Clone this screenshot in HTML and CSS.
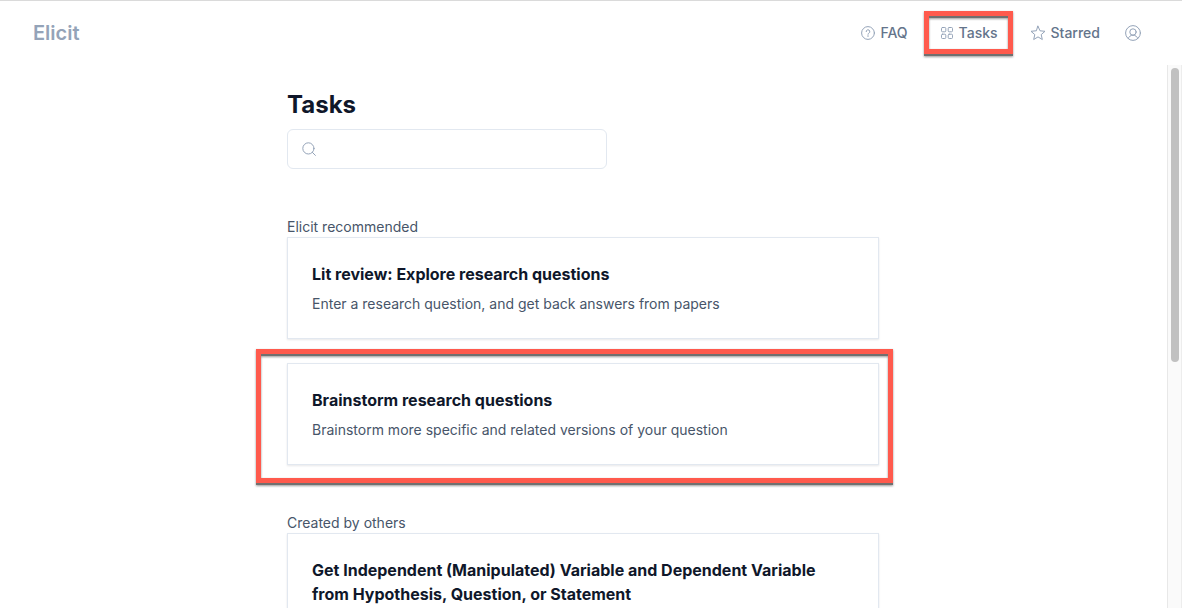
FILE: index.html
```html
<!DOCTYPE html>
<html lang="en">
<head>
<meta charset="utf-8">
<meta name="viewport" content="width=device-width, initial-scale=1">
<title>Elicit – Tasks</title>
<link rel="stylesheet" href="styles.css">
</head>
<body>
<header class="topbar">
  <a class="brand" href="#">Elicit</a>
  <nav class="nav">
    <a class="nav-link" href="#">
      <svg class="icon" viewBox="0 0 14 14" aria-hidden="true"><circle cx="7" cy="7" r="6.4"/><path d="M5.2 5.6a1.8 1.8 0 1 1 2.6 1.6c-.5.25-.8.5-.8 1.1"/><path d="M7 9.6v.9"/></svg>
      FAQ
    </a>
    <a class="nav-link nav-link-marked" href="#">
      <svg class="icon" viewBox="0 0 14 14" aria-hidden="true"><rect x="1.5" y="1.5" width="4.3" height="4.3" rx="1"/><rect x="8.2" y="1.5" width="4.3" height="4.3" rx="1"/><rect x="1.5" y="8.2" width="4.3" height="4.3" rx="1"/><rect x="8.2" y="8.2" width="4.3" height="4.3" rx="1"/></svg>
      Tasks
    </a>
    <a class="nav-link" href="#">
      <svg class="icon icon-star" viewBox="0 0 16 16" aria-hidden="true"><path d="M8 1.2 10 5.8 15 6.3 11.2 9.6 12.3 14.5 8 11.9 3.7 14.5 4.8 9.6 1 6.3 6 5.8Z"/></svg>
      Starred
    </a>
    <button class="account" type="button" aria-label="Account">
      <svg class="icon icon-account" viewBox="0 0 16 16" aria-hidden="true"><circle cx="8" cy="8" r="7.4"/><circle cx="8" cy="7" r="3.2"/><path d="M3.2 13.5C3.9 11.5 5.7 10.2 8 10.2s4.1 1.3 4.8 3.3"/></svg>
    </button>
  </nav>
</header>
<div class="viewport">
  <main class="content">
    <h1 class="title">Tasks</h1>
    <label class="search">
      <svg class="icon" viewBox="0 0 14 14" aria-hidden="true"><circle cx="6.4" cy="6.4" r="5.6"/><path d="M10.4 10.4 13.4 13.4"/></svg>
      <input class="search-input" type="search" aria-label="Search tasks">
    </label>
    <section class="group">
      <h2 class="group-title">Elicit recommended</h2>
      <div class="cards">
        <a class="card" href="#">
          <h3 class="card-title">Lit review: Explore research questions</h3>
          <p class="card-text">Enter a research question, and get back answers from papers</p>
        </a>
        <a class="card card-marked" href="#">
          <h3 class="card-title">Brainstorm research questions</h3>
          <p class="card-text">Brainstorm more specific and related versions of your question</p>
        </a>
      </div>
    </section>
    <section class="group">
      <h2 class="group-title">Created by others</h2>
      <div class="cards">
        <a class="card" href="#">
          <h3 class="card-title">Get Independent (Manipulated) Variable and Dependent Variable from Hypothesis, Question, or Statement</h3>
        </a>
      </div>
    </section>
  </main>
  <div class="scrolltrack" aria-hidden="true"><div class="scrollthumb"></div></div>
</div>
</body>
</html>
```
FILE: styles.css
```css
* { box-sizing: border-box; }

body {
  margin: 0;
  height: 100vh;
  display: flex;
  flex-direction: column;
  overflow: hidden;
  background: #fff;
  border-top: 1px solid #dadada;
  color: #475569;
  font: 400 14px/20px Inter, "Liberation Sans", sans-serif;
}

a { color: inherit; text-decoration: none; }
h1, h2, h3, p { margin: 0; }

.icon {
  width: 14px;
  height: 14px;
  flex: none;
  fill: none;
  stroke: #94a3b8;
  stroke-width: 1;
  stroke-linecap: round;
  stroke-linejoin: round;
}
.icon-star { width: 16px; height: 16px; }
.icon-account { width: 16px; height: 16px; }

.topbar {
  flex: none;
  display: flex;
  align-items: center;
  justify-content: space-between;
  height: 64px;
  padding: 0 41px 0 33px;
}
.brand {
  color: #94a3b8;
  font-size: 20px;
  font-weight: 600;
  line-height: 28px;
}
.nav { display: flex; align-items: center; gap: 32px; }
.nav-link {
  position: relative;
  display: flex;
  align-items: center;
  gap: 5px;
  color: #64748b;
  font-weight: 500;
}
.account {
  display: flex;
  margin-left: -7px;
  padding: 0;
  border: 0;
  background: none;
}

/* Highlight frames */
.nav-link-marked::after,
.card-marked::after {
  content: "";
  position: absolute;
  border: 5px solid #ff5a4d;
  filter: drop-shadow(0 2px 0 #707070) drop-shadow(0 1px 1px #999);
  pointer-events: none;
}
.nav-link-marked::after { inset: -12px -15px -11px -16px; }
.card-marked::after { inset: -15px -15px -19px -32px; }

.viewport { flex: 1; display: flex; gap: 1px; min-height: 0; }
.content {
  flex: 1;
  max-width: 592px;
  margin: 0 auto;
  padding-top: 24px;
}
.title {
  color: #0f172a;
  font-size: 24px;
  font-weight: 700;
  line-height: 32px;
}
.search {
  display: flex;
  align-items: center;
  gap: 12px;
  width: 320px;
  max-width: 100%;
  height: 40px;
  margin-top: 8px;
  padding: 0 14px;
  border: 1px solid #e2e8f0;
  border-radius: 6px;
}
.search-input {
  flex: 1;
  min-width: 0;
  border: 0;
  outline: 0;
  background: none;
  color: #0f172a;
  font: inherit;
}
.group { margin-top: 48px; }
.group-title { font-size: 14px; font-weight: 400; line-height: 20px; }
.cards { display: grid; gap: 24px; }
.card {
  position: relative;
  display: block;
  padding: 24px;
  border: 1px solid #e2e8f0;
  box-shadow: 0 1px 2px rgba(15, 23, 42, .1);
}
.card-title {
  color: #0f172a;
  font-size: 16px;
  font-weight: 700;
  line-height: 24px;
}
.card-text { margin-top: 8px; }

.scrolltrack {
  flex: none;
  width: 15px;
  padding: 3px 3px 0;
  border-left: 1px solid #e8e8e8;
  border-right: 1px solid #ededed;
  background: #fafafa;
}
.scrollthumb {
  width: 8px;
  height: calc(54% + 2px);
  border-radius: 4px;
  background: #c1c1c1;
}
```
